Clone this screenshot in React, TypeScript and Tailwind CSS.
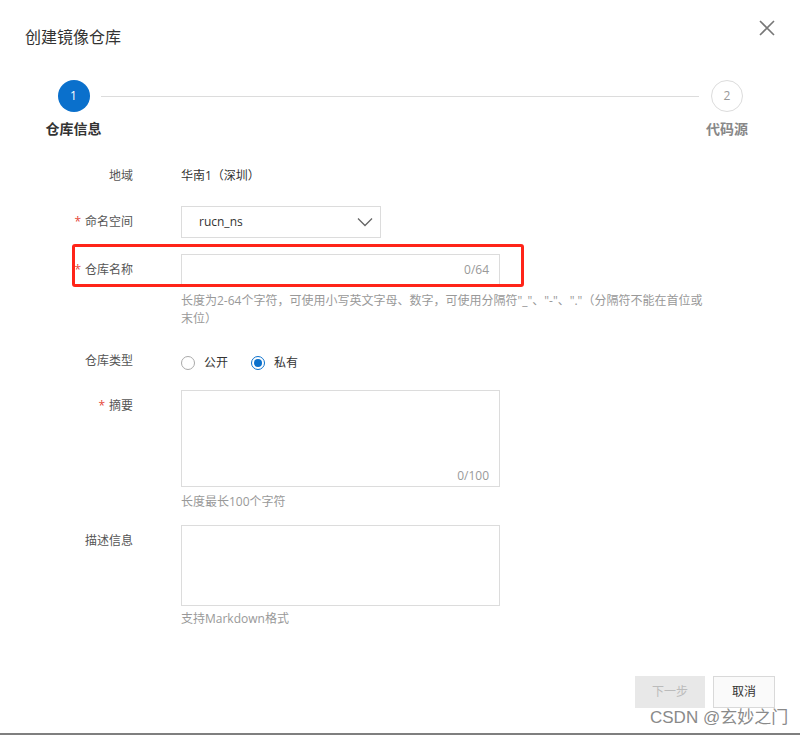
import React from "react";

const font = {
  fontFamily: '"Open Sans", "Noto Sans CJK SC", sans-serif',
};

function Label({ children, required }: { children: React.ReactNode; required?: boolean }) {
  return (
    <div className="w-[133px] shrink-0 text-right text-[12px] leading-[20px] text-[#555]">
      {required && <span className="mr-[4px] text-[#e5473b]">*</span>}
      {children}
    </div>
  );
}

export default function App() {
  return (
    <div
      className="relative h-[735px] w-[800px] overflow-hidden border-b-2 border-[#7f7f7f] bg-white"
      style={font}
    >
      {/* header */}
      <div className="flex h-[47px] items-start">
        <div className="ml-[25px] mt-[27px] text-[16px] leading-[20px] text-[#333]">创建镜像仓库</div>
        <button className="ml-auto mr-[25px] mt-[20px] text-[#777]">
          <svg width="16" height="16" viewBox="0 0 16 16" fill="none" stroke="currentColor" strokeWidth="1.6">
            <path d="M1 1 L15 15 M15 1 L1 15" />
          </svg>
        </button>
      </div>

      {/* steps */}
      <div className="ml-[46px] mr-[52px] mt-[33px] flex items-start">
        <div className="flex w-[55px] shrink-0 flex-col items-center">
          <div className="flex h-[32px] w-[32px] items-center justify-center rounded-full bg-[#0a70cc] text-[12px] text-white">
            1
          </div>
          <div className="mt-[7px] whitespace-nowrap text-[14px] font-bold leading-[20px] text-[#333]">仓库信息</div>
        </div>
        <div className="mr-[7px] mt-[15.5px] h-px flex-1 bg-[#dcdcdc]" />
        <div className="flex w-[42px] shrink-0 flex-col items-center">
          <div className="flex h-[32px] w-[32px] items-center justify-center rounded-full border border-[#dcdcdc] bg-white text-[12px] text-[#999]">
            2
          </div>
          <div className="mt-[7px] whitespace-nowrap text-[14px] font-bold leading-[20px] text-[#888]">代码源</div>
        </div>
      </div>

      {/* form */}
      <div className="mt-[27px]">
        <div className="flex">
          <Label>地域</Label>
          <div className="ml-[48px] text-[12px] leading-[20px] text-[#333]">华南1（深圳）</div>
        </div>

        <div className="mt-[20px] flex items-center">
          <Label required>命名空间</Label>
          <div className="ml-[48px] flex h-[32px] w-[200px] items-center justify-between border border-[#dcdcdc] bg-white pl-[17px] pr-[7px]">
            <span className="text-[12px] text-[#333]">rucn_ns</span>
            <svg width="16" height="10" viewBox="0 0 16 10" fill="none" stroke="#666" strokeWidth="1.3">
              <path d="M1 1.5 L8 8.5 L15 1.5" />
            </svg>
          </div>
        </div>

        <div className="mt-[16px] flex items-center">
          <Label required>仓库名称</Label>
          <div className="relative ml-[48px] h-[32px] w-[319px] border border-[#dcdcdc] bg-white">
            <span className="absolute right-[10px] top-1/2 -translate-y-1/2 text-[12px] text-[#999]">0/64</span>
          </div>
        </div>
        <div className="ml-[181px] mt-[6px] w-[525px] text-[12px] leading-[18px] text-[#999]">
          长度为2-64个字符，可使用小写英文字母、数字，可使用分隔符"_"、"-"、"."（分隔符不能在首位或末位）
        </div>

        <div className="mt-[23px] flex items-start">
          <Label>仓库类型</Label>
          <div className="ml-[48px] mt-[2px] flex items-center text-[12px] leading-[20px] text-[#333]">
            <span className="h-[14px] w-[14px] rounded-full border border-[#aaa] bg-white" />
            <span className="ml-[9px]">公开</span>
            <span className="ml-[23px] flex h-[14px] w-[14px] items-center justify-center rounded-full border border-[#0a70cc] bg-white">
              <span className="h-[8px] w-[8px] rounded-full bg-[#0a70cc]" />
            </span>
            <span className="ml-[9px]">私有</span>
          </div>
        </div>

        <div className="mt-[17px] flex items-start">
          <div className="pt-[6px]">
            <Label required>摘要</Label>
          </div>
          <div className="relative ml-[48px] h-[97px] w-[319px] border border-[#dcdcdc] bg-white">
            <span className="absolute bottom-[1px] right-[10px] text-[12px] leading-[18px] text-[#999]">0/100</span>
          </div>
        </div>
        <div className="ml-[181px] mt-[6px] text-[12px] leading-[18px] text-[#999]">长度最长100个字符</div>

        <div className="mt-[14px] flex items-start">
          <div className="pt-[6px]">
            <Label>描述信息</Label>
          </div>
          <div className="ml-[48px] h-[81px] w-[319px] border border-[#dcdcdc] bg-white" />
        </div>
        <div className="ml-[181px] mt-[4px] text-[12px] leading-[18px] text-[#999]">支持Markdown格式</div>
      </div>

      {/* footer buttons */}
      <div className="mr-[25px] mt-[48px] flex justify-end gap-[8px]">
        <button className="h-[32px] w-[70px] bg-[#e8e8e8] text-[12px] text-[#bbb]">下一步</button>
        <button className="h-[32px] w-[62px] border border-[#d9d9d9] bg-[#fafafa] text-[12px] text-[#333]">取消</button>
      </div>

      {/* annotation box */}
      <div className="pointer-events-none absolute left-[72px] top-[244px] h-[43px] w-[452px] rounded-[3px] border-[3px] border-[#ff2418]" />

      {/* watermark */}
      <div
        className="pointer-events-none absolute left-[650px] top-[707px] whitespace-nowrap text-[17px] leading-[22px] text-[#8a8a8a]"
        style={{ fontFamily: '"Liberation Sans", "Noto Sans CJK SC", sans-serif' }}
      >
        CSDN @玄妙之门
      </div>
    </div>
  );
}
